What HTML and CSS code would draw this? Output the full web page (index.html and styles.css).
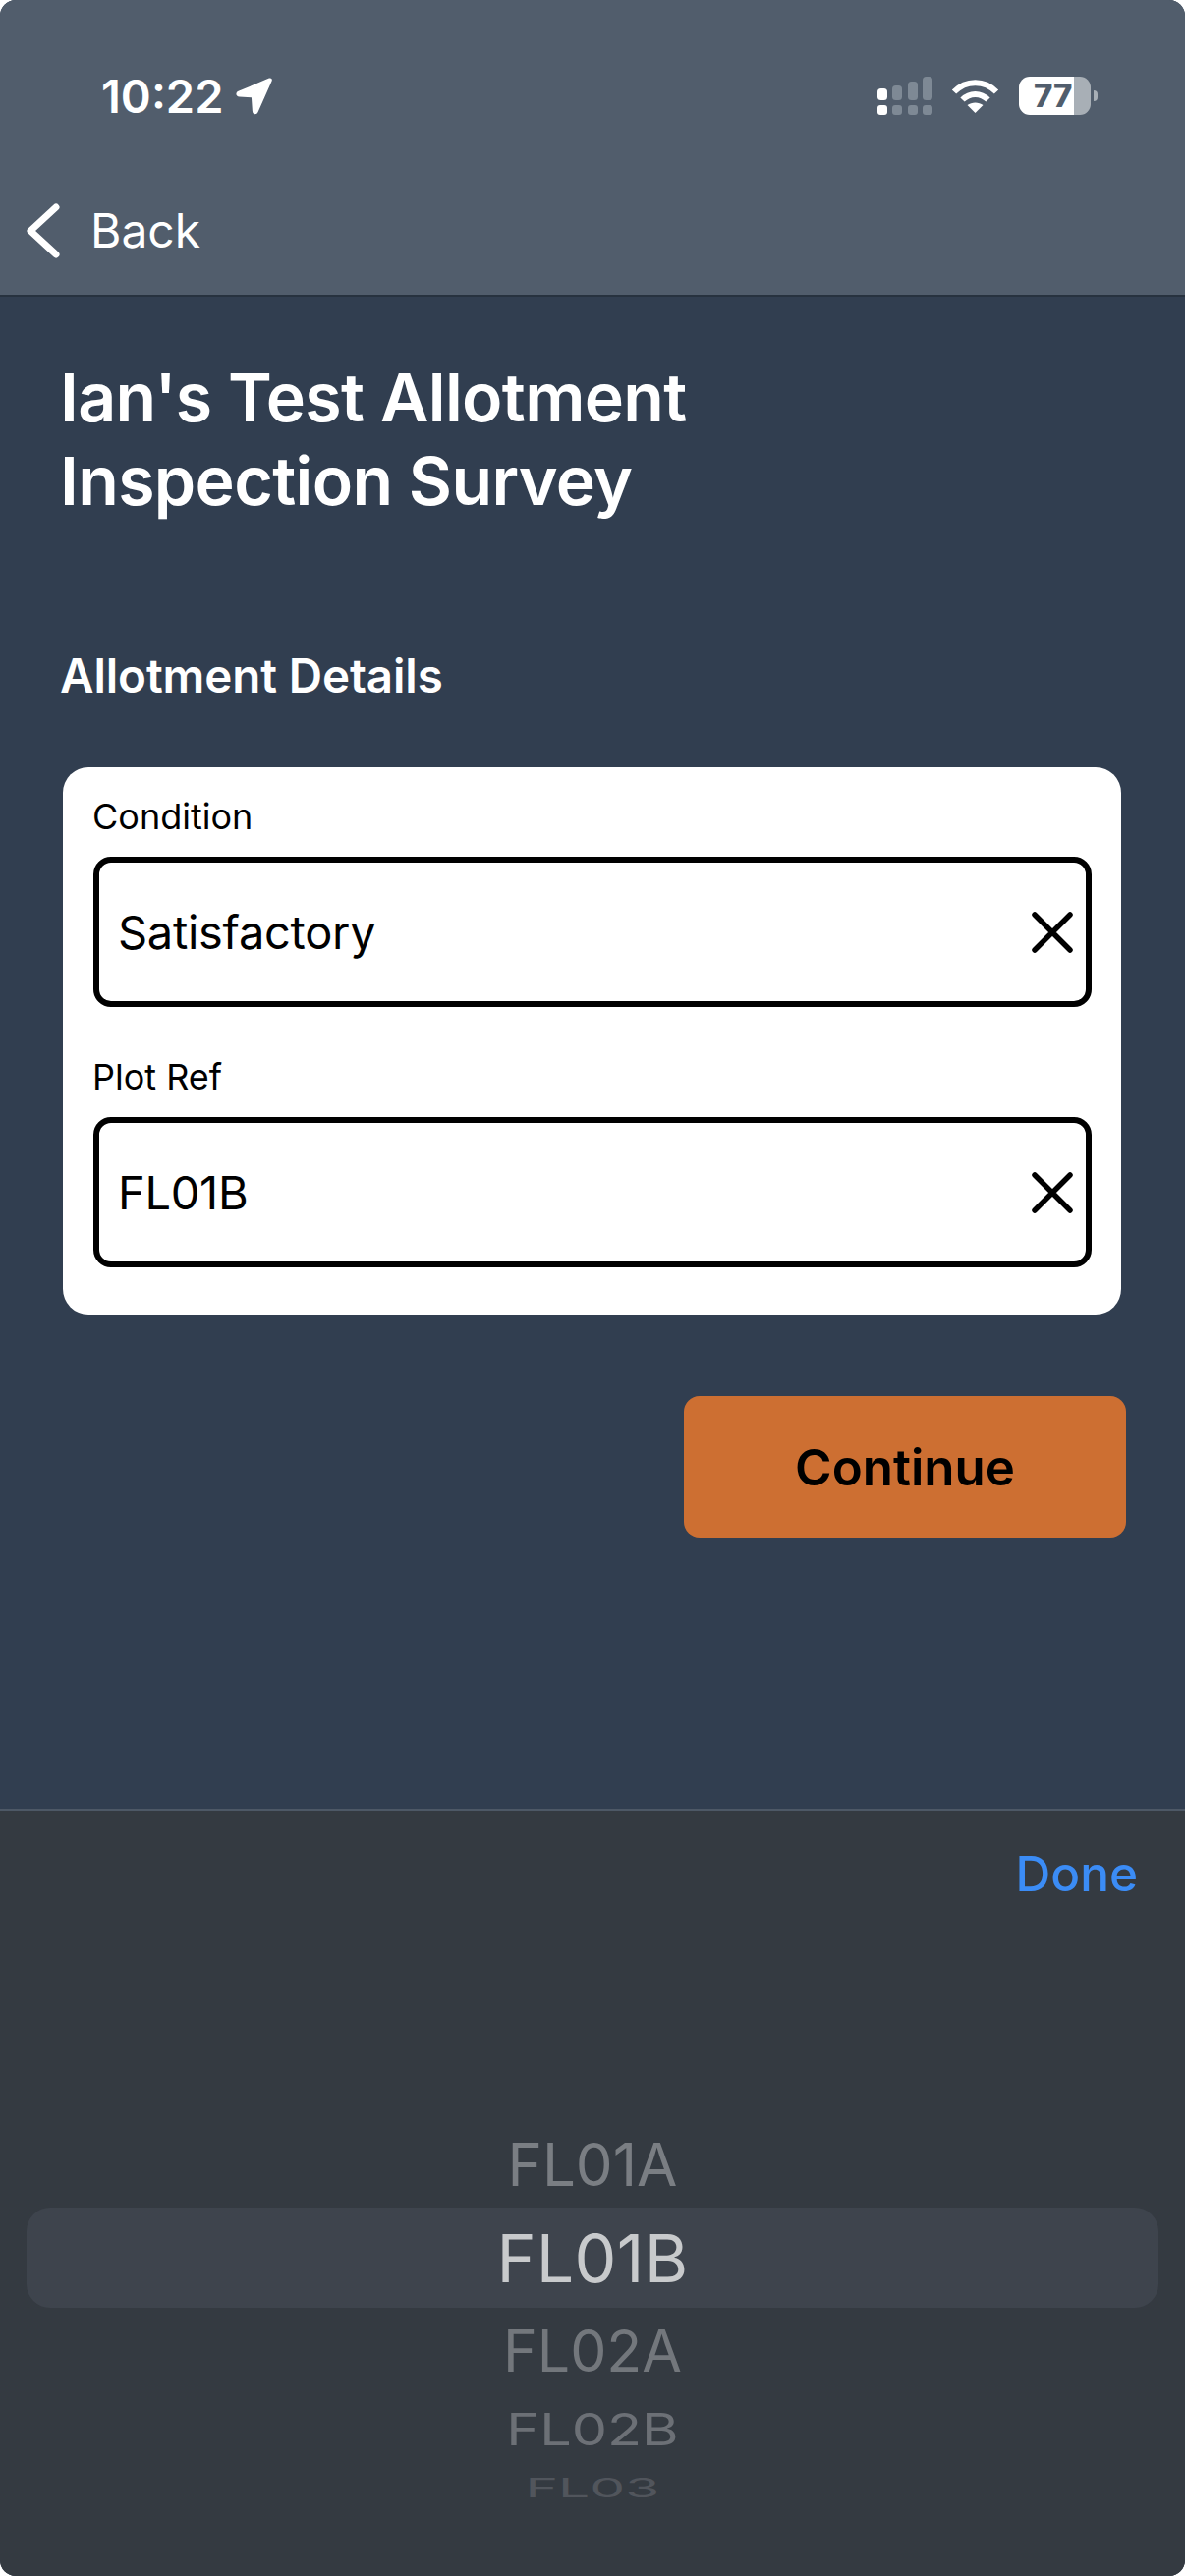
FILE: index.html
```html
<!DOCTYPE html>
<html lang="en">
<head>
<meta charset="utf-8">
<title>Allotment Inspection Survey</title>
<link rel="stylesheet" href="styles.css">
</head>
<body>
<div class="screen">
  <header class="topbar">
    <div class="status">
      <div class="status-left">
        <span class="time">10:22</span>
        <svg class="loc" viewBox="0 0 36 37"><path d="M33 .6 2.500 13.500c-3.200 1.500-2.700 5.400 1 5.600l12 .6.900 13.300c.3 3.700 4.200 4.300 5.600 1L35.600 3.500c.9-2.200-.6-3.700-2.600-2.900z" fill="#fff"/></svg>
      </div>
      <div class="status-right">
        <svg class="signal" viewBox="0 0 56 39">
          <rect x="0" y="12" width="10" height="12" rx="3.500" fill="#fff"/>
          <rect x="0" y="29" width="10" height="10" rx="3" fill="#fff"/>
          <g fill="#7e8995">
            <rect x="15" y="9" width="10" height="15" rx="3.500"/>
            <rect x="15" y="29" width="10" height="10" rx="3"/>
            <rect x="31" y="5" width="10" height="19" rx="3.500"/>
            <rect x="31" y="29" width="10" height="10" rx="3"/>
            <rect x="46" y="0" width="10" height="24" rx="3.500"/>
            <rect x="46" y="29" width="10" height="10" rx="3"/>
          </g>
        </svg>
        <svg class="wifi" viewBox="0 0 49 35" fill="none" stroke="#fff" stroke-width="6">
          <path d="M3 13.500C15 1 34 1 46 13.500"/>
          <path d="M11.500 21.500C19 14 30 14 37.500 21.500"/>
          <path d="M24.500 35 16.500 27c4.500-3.500 11.500-3.500 16 0z" fill="#fff" stroke="none"/>
        </svg>
        <div class="battery">
          <div class="battery-body"><span class="battery-level">77</span></div>
          <span class="battery-nub"></span>
        </div>
      </div>
    </div>
    <a class="back">
      <svg class="chevron" viewBox="0 0 34 56" fill="none" stroke="#fff" stroke-width="7" stroke-linecap="round" stroke-linejoin="round"><path d="M30 4 4 28l26 24"/></svg>
      <span>Back</span>
    </a>
  </header>
  <main class="content">
    <h1 class="title">Ian's Test Allotment<br>Inspection Survey</h1>
    <h2 class="section">Allotment Details</h2>
    <section class="card">
      <div class="field">
        <label class="label">Condition</label>
        <div class="input">
          <span>Satisfactory</span>
          <svg class="clear" viewBox="0 0 42 42" stroke="#000" stroke-width="5.500" stroke-linecap="round"><path d="M3 3l36 36M39 3 3 39"/></svg>
        </div>
      </div>
      <div class="field">
        <label class="label">Plot Ref</label>
        <div class="input">
          <span>FL01B</span>
          <svg class="clear" viewBox="0 0 42 42" stroke="#000" stroke-width="5.500" stroke-linecap="round"><path d="M3 3l36 36M39 3 3 39"/></svg>
        </div>
      </div>
    </section>
    <div class="actions"><button class="continue">Continue</button></div>
  </main>
  <footer class="sheet">
    <div class="sheet-bar"><span class="done">Done</span></div>
    <div class="wheel">
      <div class="item item-a">FL01A</div>
      <div class="item item-current">FL01B</div>
      <div class="item item-c">FL02A</div>
      <div class="item item-d">FL02B</div>
      <div class="item item-e">FL03</div>
    </div>
  </footer>
</div>
</body>
</html>
```
FILE: styles.css
```css
* { box-sizing: border-box; }
html, body { margin: 0; padding: 0; background: #fff; }
body { width: 1206px; height: 2622px; font-family: Inter, "Liberation Sans", sans-serif; overflow: hidden; }
.screen { width: 1206px; height: 2622px; display: flex; flex-direction: column; overflow: hidden; border-radius: 16px; background: #313e50; }
.topbar { height: 302px; flex: none; background: #515d6c; border-bottom: 2px solid #27323f; display: flex; flex-direction: column; }
.status { display: flex; justify-content: space-between; align-items: flex-start; padding: 78px 89px 0 103px; height: 200px; }
.status-left { display: flex; align-items: center; gap: 13px; height: 39px; }
.time { font-size: 47px; font-weight: 600; color: #fff; line-height: 39px; letter-spacing: 0; }
.loc { width: 37px; height: 38px; display: block; }
.status-right { display: flex; align-items: flex-start; }
.signal { width: 56px; height: 39px; display: block; }
.wifi { width: 49px; height: 35px; display: block; margin: 2px 20px 0 19px; }
.battery { display: flex; align-items: center; height: 39px; }
.battery-body { width: 73px; height: 39px; border-radius: 11px; background: linear-gradient(90deg, #fff 0 56px, #a8afb6 56px); }
.battery-level { display: block; padding-left: 15px; font-size: 33px; font-weight: 800; line-height: 39px; color: #515d6c; letter-spacing: 0; }
.battery-nub { width: 4px; height: 11px; margin-left: 3px; background: #a8afb6; border-radius: 0 6px 6px 0; }
.back { display: flex; align-items: center; padding-left: 27px; color: #fff; font-size: 48px; line-height: 56px; height: 56px; margin-top: 7px; }
.chevron { width: 34px; height: 56px; display: block; margin-right: 31px; }
.content { flex: 1; padding: 0 60px 0 61px; }
.title { margin: 0; padding-top: 60px; font-size: 68px; line-height: 85px; font-weight: 600; color: #fff; letter-spacing: -0.65px; }
.section { margin: 0; padding-top: 128px; font-size: 47.500px; line-height: 56px; font-weight: 600; color: #fff; letter-spacing: -0.1px; }
.card { margin: 65px 4px 0 3px; width: 1077px; height: 557px; background: #fff; border-radius: 26px; padding: 28px 30px 0 30px; display: flex; flex-direction: column; gap: 49px; }
.field { display: flex; flex-direction: column; }
.label { font-size: 36px; line-height: 44px; color: #000; margin-bottom: 19px; }
.input { height: 153px; border: 6px solid #000; border-radius: 18px; display: flex; align-items: center; justify-content: space-between; padding: 0 13px 0 19px; font-size: 47px; letter-spacing: -0.3px; color: #000; margin-left: 1px; }
.clear { width: 42px; height: 42px; display: block; }
.actions { display: flex; justify-content: flex-end; padding-top: 83px; }
.continue { width: 450px; height: 144px; border: 0; border-radius: 16px; background: #cd6f32; color: #000; font-family: inherit; font-size: 51px; font-weight: 600; }
.sheet { height: 781px; flex: none; background: #343a41; border-top: 2px solid #4d5866; }
.sheet-bar { display: flex; justify-content: flex-end; padding: 34px 48px 0 0; height: 310px; }
.done { font-size: 49.500px; font-weight: 500; line-height: 60px; color: #3b8cf6; }
.wheel { display: flex; flex-direction: column; padding: 0 27px; }
.item { display: flex; align-items: center; justify-content: center; flex: none; }
.item-a { height: 94px; font-size: 60px; color: #7a7e83; padding-top: 6px; }
.item-current { height: 102px; font-size: 68px; letter-spacing: 0.3px; color: #c8cacc; background: #3e444d; border-radius: 24px; }
.item-c { height: 90px; font-size: 59px; color: #73777c; padding-bottom: 3px; }
.item-d { height: 70px; font-size: 57.500px; color: #6c7076; transform: scaleY(0.79); padding-bottom: 4px; }
.item-e { height: 50px; font-size: 57px; color: #51555c; transform: scaleY(0.48); padding-bottom: 9px; }
```
